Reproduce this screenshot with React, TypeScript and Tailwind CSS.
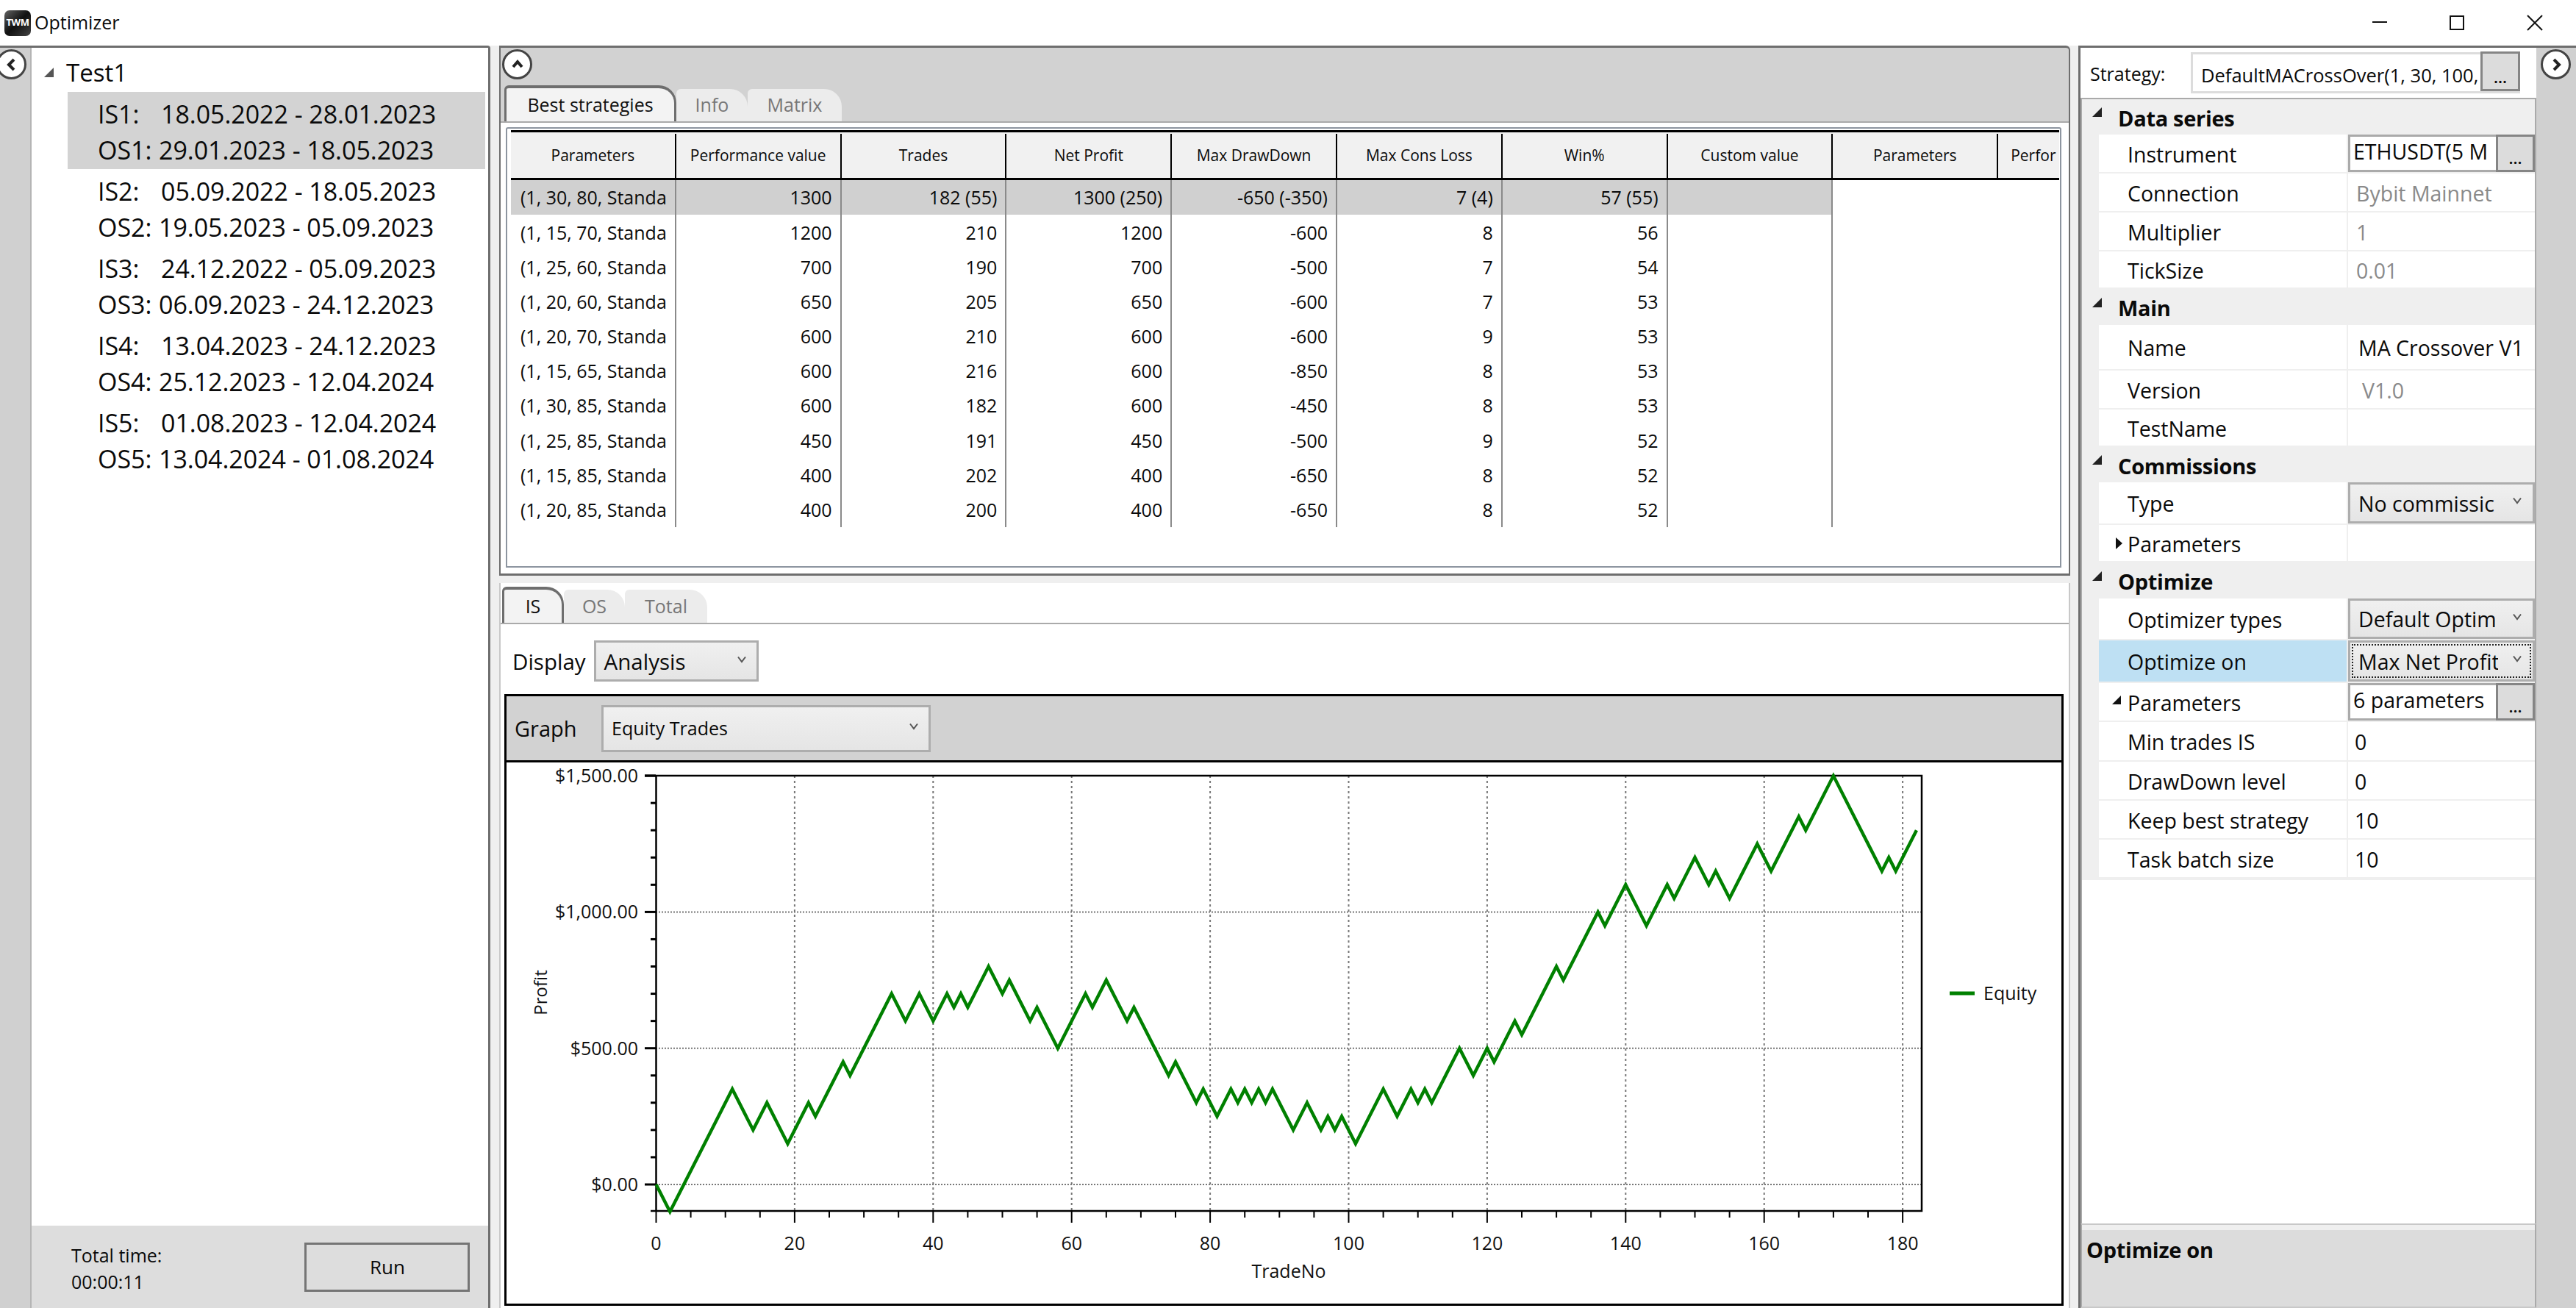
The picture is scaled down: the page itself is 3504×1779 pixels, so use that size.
import type { ReactNode } from "react";

const pts: [number, number][] = [
  [0, 0], [2, -100], [11, 350], [14, 200], [16, 300], [19, 150], [22, 300], [23, 250], [27, 450], [28, 400],
  [34, 700], [36, 600], [38, 700], [40, 600], [42, 700], [43, 650], [44, 700], [45, 650], [48, 800], [50, 700],
  [51, 750], [54, 600], [55, 650], [58, 500], [62, 700], [63, 650], [65, 750], [68, 600], [69, 650], [74, 400],
  [75, 450], [78, 300], [79, 350], [81, 250], [83, 350], [84, 300], [85, 350], [86, 300], [87, 350], [88, 300],
  [89, 350], [92, 200], [94, 300], [96, 200], [97, 250], [98, 200], [99, 250], [101, 150], [105, 350], [107, 250],
  [109, 350], [110, 300], [111, 350], [112, 300], [116, 500], [118, 400], [120, 500], [121, 450], [124, 600], [125, 550],
  [130, 800], [131, 750], [136, 1000], [137, 950], [140, 1100], [143, 950], [146, 1100], [147, 1050], [150, 1200], [152, 1100],
  [153, 1150], [155, 1050], [159, 1250], [161, 1150], [165, 1350], [166, 1300], [170, 1500], [177, 1150], [178, 1200], [179, 1150],
  [182, 1300],
];

const px = (t: number) => 892.5 + t * 9.42;
const py = (v: number) => 1611 - v * 0.3706;

const runs = [
  ["18.05.2022 - 28.01.2023", "29.01.2023 - 18.05.2023"],
  ["05.09.2022 - 18.05.2023", "19.05.2023 - 05.09.2023"],
  ["24.12.2022 - 05.09.2023", "06.09.2023 - 24.12.2023"],
  ["13.04.2023 - 24.12.2023", "25.12.2023 - 12.04.2024"],
  ["01.08.2023 - 12.04.2024", "13.04.2024 - 01.08.2024"],
];

const headers = ["Parameters", "Performance value", "Trades", "Net Profit", "Max DrawDown", "Max Cons Loss", "Win%", "Custom value", "Parameters"];

const rows = [
  ["(1, 30, 80, Standa", "1300", "182 (55)", "1300 (250)", "-650 (-350)", "7 (4)", "57 (55)", ""],
  ["(1, 15, 70, Standa", "1200", "210", "1200", "-600", "8", "56", ""],
  ["(1, 25, 60, Standa", "700", "190", "700", "-500", "7", "54", ""],
  ["(1, 20, 60, Standa", "650", "205", "650", "-600", "7", "53", ""],
  ["(1, 20, 70, Standa", "600", "210", "600", "-600", "9", "53", ""],
  ["(1, 15, 65, Standa", "600", "216", "600", "-850", "8", "53", ""],
  ["(1, 30, 85, Standa", "600", "182", "600", "-450", "8", "53", ""],
  ["(1, 25, 85, Standa", "450", "191", "450", "-500", "9", "52", ""],
  ["(1, 15, 85, Standa", "400", "202", "400", "-650", "8", "52", ""],
  ["(1, 20, 85, Standa", "400", "200", "400", "-650", "8", "52", ""],
];

const Circle = ({ d, className }: { d: string; className: string }) => (
  <div className={`flex h-[41px] w-[41px] items-center justify-center rounded-full border-[3px] border-[#444] bg-white ${className}`}>
    <svg width="16" height="18" viewBox="0 0 16 18">
      <path d={d} fill="none" stroke="#222" strokeWidth="4" />
    </svg>
  </div>
);

const Vee = () => (
  <svg width="12" height="10" viewBox="0 0 12 10" className="shrink-0">
    <path d="M1 1.5 L6 8 L11 1.5" fill="none" stroke="#555" strokeWidth="2" />
  </svg>
);

const DotsButton = ({ className }: { className: string }) => (
  <div className={`flex shrink-0 items-end justify-center border-[3px] border-[#858585] bg-[#dcdcdc] pb-[6px] text-[22px] leading-none font-semibold ${className}`}>...</div>
);

const Combo = ({ label, focus }: { label: string; focus?: boolean }) => (
  <div className="h-full w-full border-[3px] border-[#adadad] bg-linear-to-b from-[#f0f0f0] to-[#e5e5e5] p-[2px]">
    <div className={`flex h-full items-center overflow-hidden border-2 pr-[11px] pl-[7px] ${focus ? "border-dotted border-[#222]" : "border-transparent"}`}>
      <span className="w-[190px] shrink-0 overflow-hidden pt-[2px] text-[28.5px] whitespace-nowrap">{label}</span>
      <span className="ml-auto -translate-y-[3px]"><Vee /></span>
    </div>
  </div>
);

const Category = ({ title, className }: { title: string; className: string }) => (
  <div className={`flex items-center ${className}`}>
    <svg width="14" height="14" viewBox="0 0 14 14" className="ml-[14px] -translate-y-[6px]">
      <path d="M13 0 V13 H0 Z" fill="#222" />
    </svg>
    <span className="ml-[21px] pt-[3px] text-[29px] font-bold -tracking-[0.3px]">{title}</span>
  </div>
);

const Prop = ({ label, className, children, active, mark }: { label: string; className: string; children?: ReactNode; active?: boolean; mark?: ReactNode }) => (
  <div className={`ml-[23px] flex border-b-2 border-[#efefef] ${className}`}>
    <div className={`relative flex w-[337px] shrink-0 items-center pt-[3px] pl-[39px] text-[28.5px] ${active ? "bg-[#bee0f3]" : "bg-white"}`}>
      {mark}
      {label}
    </div>
    <div className="ml-[2px] flex min-w-0 flex-1 items-center bg-white text-[28.5px] whitespace-nowrap">{children}</div>
  </div>
);

const Value = ({ children, className }: { children: ReactNode; className: string }) => (
  <span className={`pt-[3px] ${className}`}>{children}</span>
);

const Tab = ({ label, on, className }: { label: string; on?: boolean; className: string }) => (
  <div className={`flex items-center justify-center rounded-tl-[6px] rounded-tr-[24px] ${on ? "border-x-[3px] border-t-[4px] border-[#6e6e6e] bg-[#f3f3f3] text-[#111]" : "bg-[#ececec] text-[#777]"} ${className}`}>{label}</div>
);

const Chart = () => (
  <svg className="block flex-1" viewBox="689 1037 2115 736" width="2115" height="736">
    {[1000, 500, 0].map((v) => (
      <line key={v} x1="892" x2="2614" y1={py(v)} y2={py(v)} stroke="#777" strokeWidth="2" strokeDasharray="2 2" />
    ))}
    {[20, 40, 60, 80, 100, 120, 140, 160, 180].map((t) => (
      <line key={t} x1={px(t)} x2={px(t)} y1="1055" y2="1647" stroke="#777" strokeWidth="2" strokeDasharray="3 4" />
    ))}
    <path d="M892 1055 H2614 V1647 H885 M892.5 1055 V1647" fill="none" stroke="#000" strokeWidth="2.5" />
    <line x1="877" x2="892" y1="1055" y2="1055" stroke="#000" strokeWidth="3" />
    {Array.from({ length: 16 }, (_, i) => i * 100).map((v) => (
      <line key={v} x1={v % 500 === 0 ? 877 : 885} x2="892" y1={py(v)} y2={py(v)} stroke="#000" strokeWidth="3" />
    ))}
    {Array.from({ length: 37 }, (_, i) => i * 5).map((t) => (
      <line key={t} x1={px(t)} x2={px(t)} y1="1647" y2={t % 20 === 0 ? 1663 : 1656} stroke="#000" strokeWidth="2" />
    ))}
    <polyline points={pts.map(([t, v]) => `${px(t)},${py(v)}`).join(" ")} fill="none" stroke="#008000" strokeWidth="4.5" strokeLinejoin="miter" />
    {[[1500, "$1,500.00"], [1000, "$1,000.00"], [500, "$500.00"], [0, "$0.00"]].map(([v, s]) => (
      <text key={s} x="868" y={py(v as number) + 9} textAnchor="end" fontSize="25" fill="#111">{s}</text>
    ))}
    {[0, 20, 40, 60, 80, 100, 120, 140, 160, 180].map((t) => (
      <text key={t} x={px(t)} y="1700" textAnchor="middle" fontSize="25" fill="#111">{t}</text>
    ))}
    <text x="1753" y="1738" textAnchor="middle" fontSize="25" fill="#111">TradeNo</text>
    <text transform="translate(744 1350) rotate(-90)" textAnchor="middle" fontSize="24" fill="#111">Profit</text>
    <line x1="2652" x2="2686" y1="1351" y2="1351" stroke="#008000" strokeWidth="5" />
    <text x="2698" y="1360" fontSize="25" fill="#111">Equity</text>
  </svg>
);

export default function App() {
  return (
    <div className="flex h-[1779px] w-[3504px] flex-col overflow-hidden bg-[#efefef] font-['Open_Sans',sans-serif] text-[#0a0a0a]">
      {/* title bar */}
      <div className="flex h-[62px] shrink-0 items-center bg-white">
        <div className="ml-[6px] flex h-[35px] w-[36px] items-center justify-center rounded-[7px] bg-linear-to-br from-[#666] via-[#111] to-[#444] text-[13px] font-bold -tracking-[0.5px] text-white">TWM</div>
        <span className="ml-[5px] text-[25px]">Optimizer</span>
        <div className="ml-auto flex items-center">
          <svg width="22" height="22" viewBox="0 0 22 22" className="mr-[83px]"><path d="M1 10 H21" stroke="#111" strokeWidth="2" /></svg>
          <svg width="22" height="22" viewBox="0 0 22 22" className="mr-[84px]"><rect x="2" y="2" width="18" height="18" fill="none" stroke="#111" strokeWidth="2" /></svg>
          <svg width="22" height="22" viewBox="0 0 22 22" className="mr-[45px]"><path d="M1 1 L21 21 M21 1 L1 21" stroke="#111" strokeWidth="2" /></svg>
        </div>
      </div>

      <div className="flex min-h-0 flex-1">
        {/* left pane */}
        <div className="flex w-[667px] shrink-0 flex-col rounded-tr-[4px] border-t-[3px] border-r-[3px] border-[#6e6e6e]">
          <div className="flex min-h-0 flex-1">
            <div className="relative w-[41px] shrink-0 bg-[#d0d0d0]">
              <Circle d="M11 2 L4 9 L11 16" className="absolute top-[2px] -left-[5px]" />
            </div>
            <div className="flex min-w-0 flex-1 flex-col border-l-2 border-[#b5b5b5] bg-white">
              <div className="flex-1 pr-[4px]">
                <div className="flex h-[60px] items-center pt-[8px]">
                  <svg width="14" height="14" viewBox="0 0 14 14" className="ml-[17px]"><path d="M13 0 V13 H0 Z" fill="#555" /></svg>
                  <span className="ml-[16px] text-[33px]">Test1</span>
                </div>
                <div className="ml-[49px]">
                  {runs.map(([is, os], i) => (
                    <div key={i} className={`h-[105px] pt-[6px] pl-[41px] text-[34px] leading-[48.5px] tracking-[-0.05px] ${i === 0 ? "bg-[#d3d3d3]" : ""}`}>
                      <div className="flex whitespace-pre"><span className="w-[86px]">IS{i + 1}:</span>{is}</div>
                      <div className="flex whitespace-pre"><span className="w-[83px]">OS{i + 1}:</span>{os}</div>
                    </div>
                  ))}
                </div>
              </div>
              <div className="flex h-[112px] shrink-0 bg-[#dddddd] pt-[23px] pl-[54px]">
                <div className="-mt-[1px] text-[25px] leading-[36px]">
                  <div>Total time:</div>
                  <div>00:00:11</div>
                </div>
                <div className="ml-[194px] flex h-[67px] w-[225px] items-center justify-center border-[3px] border-[#757575] text-[26px]">Run</div>
              </div>
            </div>
          </div>
        </div>

        {/* centre */}
        <div className="ml-[12px] flex w-[2137px] shrink-0 flex-col">
          <div className="flex h-[721px] shrink-0 flex-col rounded-tr-[6px] border-x-2 border-t-[3px] border-b-[3px] border-[#6e6e6e] bg-[#d2d2d2]">
            <div className="flex h-[100px] shrink-0 flex-col pt-[2px] pl-[2px]">
              <Circle d="M2 12 L8 5 L14 12" className="shrink-0" />
              <div className="mt-[8px] flex h-[49px] items-end pl-[3px] text-[25px]">
                <Tab label="Best strategies" on className="h-[49px] w-[234px]" />
                <Tab label="Info" className="h-[44px] w-[97px]" />
                <Tab label="Matrix" className="h-[44px] w-[128px]" />
              </div>
            </div>
            <div className="flex min-h-0 flex-1 flex-col border-t-2 border-[#aaa] bg-white px-[7px] pt-[6px]">
              <div className="h-[599px] w-[2116px] overflow-hidden rounded-t-[3px] border-2 border-[#8d95a0] pt-[2px] pl-[5px]">
                <div className="flex h-[68px] w-[2106px] overflow-hidden border-y-[3px] border-black bg-[#f1f1f1] pt-[2px] text-[21px]">
                  {headers.map((h, i) => (
                    <div key={i} className="flex w-[224.8px] shrink-0 items-center justify-center border-r-2 border-black">{h}</div>
                  ))}
                  <div className="w-[82px] shrink-0 self-center overflow-hidden pl-[17px] whitespace-nowrap">Perfor</div>
                </div>
                {rows.map((r, i) => (
                  <div key={i} className="flex h-[47.2px] text-[25px]">
                    {r.map((c, j) => (
                      <div key={j} className={`flex w-[224.8px] shrink-0 items-center overflow-hidden border-r-2 border-[#8a8a8a] pt-[1px] whitespace-nowrap ${j === 0 ? "pl-[13px]" : "justify-end pr-[11px]"} ${i === 0 ? "bg-[#d0d0d0]" : ""}`}>{c}</div>
                    ))}
                  </div>
                ))}
              </div>
            </div>
          </div>

          <div className="mt-[10px] flex min-h-0 flex-1 flex-col border-x-2 border-[#c8c8c8] bg-white">
            <div className="mt-[5px] flex h-[49px] shrink-0 items-end pl-[2px] text-[25px]">
              <Tab label="IS" on className="h-[49px] w-[84px]" />
              <Tab label="OS" className="h-[45px] w-[83px]" />
              <Tab label="Total" className="h-[45px] w-[112px]" />
            </div>
            <div className="flex h-[97px] shrink-0 items-start border-t-2 border-[#aaa] pt-[22px] pl-[16px]">
              <div className="flex h-[56px] items-center pt-[2px] text-[29.5px]">Display</div>
              <div className="ml-[11px] flex h-[56px] w-[224px] items-center border-[3px] border-[#adadad] bg-linear-to-b from-[#f0f0f0] to-[#e5e5e5] pt-[2px] pr-[14px] pl-[11px] text-[29.5px]">
                Analysis
                <span className="ml-auto -translate-y-[3px]"><Vee /></span>
              </div>
            </div>
            <div className="mx-[5px] flex h-[832px] w-[2121px] shrink-0 flex-col border-[3px] border-black">
              <div className="flex h-[90px] shrink-0 items-center border-b-[3px] border-black bg-[#d2d2d2] pl-[11px]">
                <span className="w-[118px] text-[29px]">Graph</span>
                <div className="flex h-[64px] w-[448px] items-center border-[3px] border-[#adadad] bg-linear-to-b from-[#f0f0f0] to-[#e5e5e5] pr-[14px] pl-[11px] text-[25px]">
                  Equity Trades
                  <span className="ml-auto -translate-y-[3px]"><Vee /></span>
                </div>
              </div>
              <Chart />
            </div>
          </div>
        </div>

        {/* right pane */}
        <div className="ml-[11px] flex min-w-0 flex-1 border-t-[3px] border-l-[3px] border-[#6e6e6e]">
          <div className="flex w-[620px] shrink-0 flex-col bg-white">
            <div className="flex h-[68px] shrink-0 items-center pl-[13px]">
              <span className="w-[137px] shrink-0 pt-[3px] text-[25px]">Strategy:</span>
              <div className="flex h-[56px] w-[448px] items-stretch border-[3px] border-r-0 border-[#dcdcdc]">
                <div className="flex w-[391px] items-center overflow-hidden pt-[6px] pl-[11px] text-[25.5px] whitespace-nowrap">DefaultMACrossOver(1, 30, 100,</div>
                <DotsButton className="-mt-[4px] w-[54px]" />
              </div>
            </div>
            <div className="flex shrink-0 flex-col border-x-2 border-t-2 border-[#aaa] bg-[#efefef] pb-[2px]">
              <Category title="Data series" className="h-[48px]" />
              <Prop label="Instrument" className="h-[53px]">
                <div className="flex h-full w-full items-stretch border-[3px] border-[#aaa]">
                  <div className="w-[198px] overflow-hidden pl-[4px] text-[28.5px] leading-[41px] whitespace-nowrap">ETHUSDT(5 M</div>
                  <DotsButton className="-m-[3px] ml-0 flex-1" />
                </div>
              </Prop>
              <Prop label="Connection" className="h-[53px]"><Value className="pl-[11px] text-[#8a8a8a]">Bybit Mainnet</Value></Prop>
              <Prop label="Multiplier" className="h-[53px]"><Value className="pl-[11px] text-[#8a8a8a]">1</Value></Prop>
              <Prop label="TickSize" className="h-[51px] border-b-0"><Value className="pl-[11px] text-[#8a8a8a]">0.01</Value></Prop>
              <Category title="Main" className="h-[49px]" />
              <Prop label="Name" className="h-[62px]"><Value className="pl-[14px]">MA Crossover V1</Value></Prop>
              <Prop label="Version" className="h-[53px]"><Value className="pl-[19px] text-[#8a8a8a]">V1.0</Value></Prop>
              <Prop label="TestName" className="h-[51px] border-b-0" />
              <Category title="Commissions" className="h-[48px]" />
              <Prop label="Type" className="h-[58px]"><Combo label="No commissic" /></Prop>
              <Prop
                label="Parameters"
                className="h-[51px] border-b-0"
                mark={<svg width="9" height="16" viewBox="0 0 9 16" className="absolute top-[17px] left-[23px]"><path d="M0 0 L9 8 L0 16 Z" fill="#111" /></svg>}
              />
              <Category title="Optimize" className="h-[49px]" />
              <Prop label="Optimizer types" className="h-[57px]"><Combo label="Default Optim" /></Prop>
              <Prop label="Optimize on" className="h-[58px]" active><Combo label="Max Net Profit" focus /></Prop>
              <Prop
                label="Parameters"
                className="h-[53px]"
                mark={<svg width="13" height="13" viewBox="0 0 13 13" className="absolute top-[17px] left-[18px]"><path d="M12 0 V12 H0 Z" fill="#111" /></svg>}
              >
                <div className="flex h-full w-full items-stretch border-[3px] border-[#aaa]">
                  <div className="w-[198px] overflow-hidden pl-[4px] text-[28.5px] leading-[41px] whitespace-nowrap">6 parameters</div>
                  <DotsButton className="-m-[3px] ml-0 flex-1" />
                </div>
              </Prop>
              <Prop label="Min trades IS" className="h-[54px]"><Value className="pl-[9px]">0</Value></Prop>
              <Prop label="DrawDown level" className="h-[53px]"><Value className="pl-[9px]">0</Value></Prop>
              <Prop label="Keep best strategy" className="h-[53px]"><Value className="pl-[9px]">10</Value></Prop>
              <Prop label="Task batch size" className="h-[53px]"><Value className="pl-[9px]">10</Value></Prop>
            </div>
            <div className="flex-1 border-x-2 border-[#aaa]" />
            <div className="h-[115px] shrink-0 border-2 border-[#c8c8c8] border-x-[#aaa] bg-[#dcdcdc]">
              <div className="h-[7px] bg-[#efefef]" />
              <div className="pt-[5px] pl-[6px] text-[29px] font-bold -tracking-[0.3px]">Optimize on</div>
            </div>
          </div>
          <div className="relative flex-1 bg-[#d0d0d0]">
            <Circle d="M5 2 L12 9 L5 16" className="absolute top-[2px] left-[6px]" />
          </div>
        </div>
      </div>
    </div>
  );
}
